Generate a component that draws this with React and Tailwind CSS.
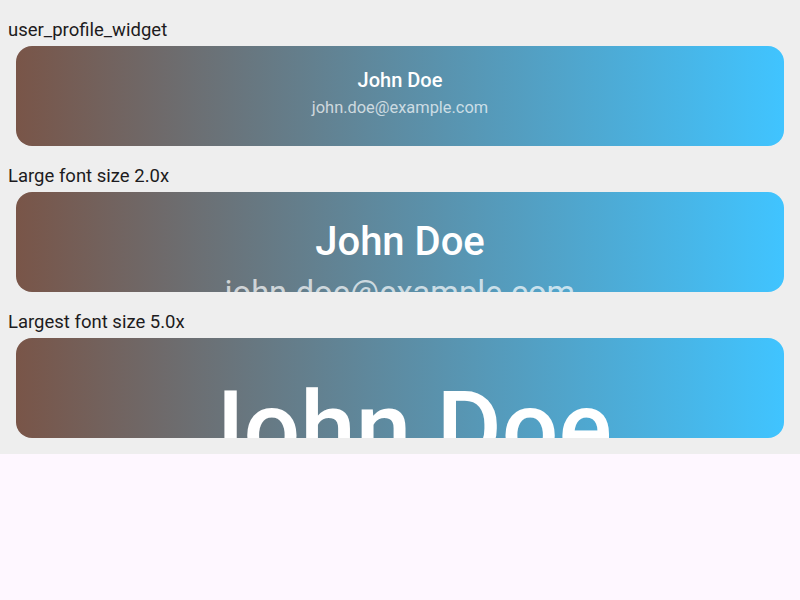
import React from "react";

const font = { fontFamily: "Roboto, sans-serif" };

function SectionLabel({ children }) {
  return (
    <div className="px-2 pt-[19px] pb-[5px] text-[18.5px] leading-[22px] text-[#1d1b20]">{children}</div>
  );
}

function ProfileCard({ nameClass, emailClass, padClass }) {
  return (
    <div className="mx-4 h-[100px] overflow-hidden rounded-2xl bg-[linear-gradient(to_right,#795548,#40c4ff)]">
      <div className={`flex flex-col items-center ${padClass}`}>
        <div className={`whitespace-nowrap font-medium leading-[1.172] text-white ${nameClass}`}>John Doe</div>
        <div className={`whitespace-nowrap leading-[1.172] text-white/70 ${emailClass}`}>john.doe@example.com</div>
      </div>
    </div>
  );
}

export default function App() {
  return (
    <div className="min-h-screen bg-[#fef7ff]" style={font}>
      <div className="bg-[#eeeeee] pb-4">
        <SectionLabel>user_profile_widget</SectionLabel>
        <ProfileCard nameClass="text-[20px]" emailClass="mt-[6px] text-[16.4px]" padClass="pt-[23px]" />
        <SectionLabel>Large font size 2.0x</SectionLabel>
        <ProfileCard nameClass="text-[40px]" emailClass="mt-2 text-[32.6px]" padClass="pt-[27px]" />
        <SectionLabel>Largest font size 5.0x</SectionLabel>
        <ProfileCard nameClass="text-[100px]" emailClass="mt-4 text-[80px]" padClass="pt-[31px]" />
      </div>
    </div>
  );
}
